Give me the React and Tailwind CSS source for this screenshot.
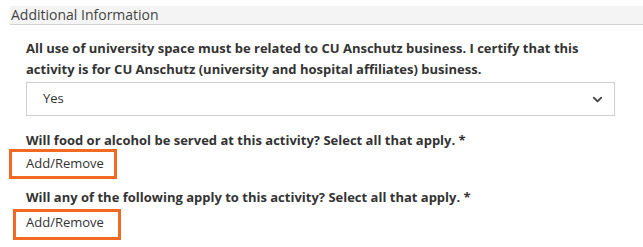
import React from "react";
import { FiChevronDown } from "react-icons/fi";

function AddRemove({ shift, extra = "" }) {
  return (
    <div className={`relative h-[24px] flex items-center ${extra}`}>
      <span className="text-[13px] text-[#333]">Add/Remove</span>
      <div
        className={`absolute border-[3px] border-[#f26a21] ${shift}`}
      />
    </div>
  );
}

export default function App() {
  return (
    <div
      className="w-[643px] h-[247px] bg-white overflow-hidden"
      style={{ fontFamily: '"Open Sans", "Liberation Sans", sans-serif' }}
    >
      <div className="ml-[10px] mt-[6px] h-[19px] bg-[#f4f4f4] border-b border-[#d2d2d2] pl-[1px] text-[14px] leading-[18px] text-[#444]">
        Additional Information
      </div>

      <div className="pl-[26px] pr-[28px] pt-[13px]">
        <p className="text-[13px] leading-[21px] font-bold text-[#333]">
          All use of university space must be related to CU Anschutz business. I certify that this
          activity is for CU Anschutz (university and hospital affiliates) business.
        </p>
        <div className="mt-[2px] h-[34px] border border-[#cfcfcf] flex items-center justify-between pl-[16px] pr-[9px]">
          <span className="text-[13px] text-[#333]">Yes</span>
          <FiChevronDown className="w-[15px] h-[15px] text-[#444]" strokeWidth={3} />
        </div>

        <p className="mt-[14px] text-[13px] leading-[21px] font-bold text-[#333]">
          Will food or alcohol be served at this activity? Select all that apply. *
        </p>
        <AddRemove shift="left-[-17px] top-[-3px] w-[108px] h-[30px]" extra="mt-[1px]" />

        <p className="mt-[11px] text-[13px] leading-[21px] font-bold text-[#333]">
          Will any of the following apply to this activity? Select all that apply. *
        </p>
        <AddRemove shift="left-[-13px] top-[-2px] w-[108px] h-[31px]" extra="mt-[3px]" />
      </div>
    </div>
  );
}
